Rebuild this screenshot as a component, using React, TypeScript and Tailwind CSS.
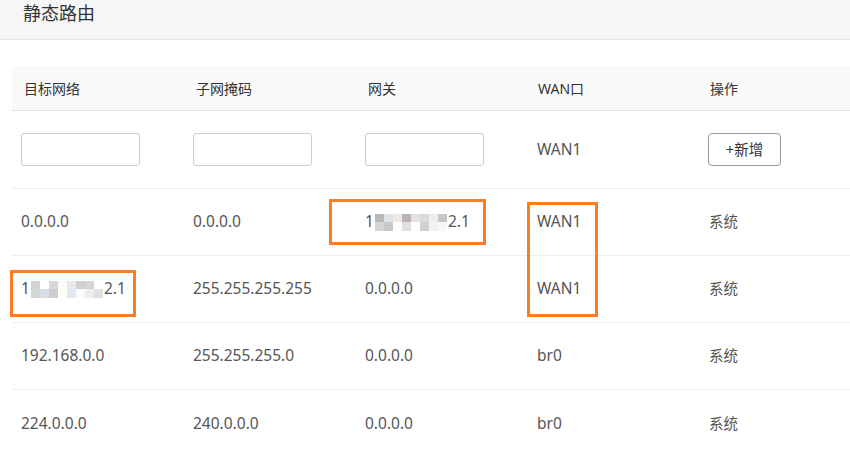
const FONT = { fontFamily: '"Noto Sans", "Noto Sans CJK SC", sans-serif' };

const COLS = 'grid grid-cols-[172px_172px_171px_172px_173px]';

// pixel mosaic used to blank out part of an address
const MOSAIC_A = [
  ['#b8b8b8', '#dde3e8', '#f3e8e0', '#b5b5b5', '#e8e0dc', '#d8dadf', '#eeeeee', '#c5c7cb'],
  ['#d6d6d6', '#c8c8c8', '#ffffff', '#e0e0e0', '#ffffff', '#d0d0d0', '#f2f2f2', '#f8f8f8'],
];
const MOSAIC_B = [
  ['#d2d2d2', '#ffffff', '#d8d8da', '#fafafa', '#ece8e6', '#cfcfd3', '#d5d5d5', '#ffffff'],
  ['#d5d5d5', '#d8dce8', '#cdcdcd', '#fffff5', '#e0e8f4', '#f8fbff', '#eeeeee', '#e0e0e0'],
];

function Mosaic({ cells }: { cells: string[][] }) {
  return (
    <span className="inline-flex flex-col align-middle mx-[1px]">
      {cells.map((row, i) => (
        <span key={i} className="flex">
          {row.map((c, j) => (
            <span key={j} className="block w-[9px] h-[8.5px]" style={{ backgroundColor: c }} />
          ))}
        </span>
      ))}
    </span>
  );
}

function Masked({ cells }: { cells: string[][] }) {
  return (
    <span className="inline-flex items-center">
      <span>1</span>
      <Mosaic cells={cells} />
      <span>2.1</span>
    </span>
  );
}

const rows: { dest: React.ReactNode; mask: string; gw: React.ReactNode; wan: string }[] = [
  { dest: '0.0.0.0', mask: '0.0.0.0', gw: <Masked cells={MOSAIC_A} />, wan: 'WAN1' },
  { dest: <Masked cells={MOSAIC_B} />, mask: '255.255.255.255', gw: '0.0.0.0', wan: 'WAN1' },
  { dest: '192.168.0.0', mask: '255.255.255.0', gw: '0.0.0.0', wan: 'br0' },
  { dest: '224.0.0.0', mask: '240.0.0.0', gw: '0.0.0.0', wan: 'br0' },
];

export default function App() {
  return (
    <div className="w-[850px] h-[453px] overflow-hidden bg-white" style={FONT}>
      {/* page title bar */}
      <div className="h-[40px] bg-[#f6f6f6] border-b border-[#e4e4e4] pl-[23px] pt-[1px]">
        <span className="text-[18px] leading-[24px] text-[#333]">静态路由</span>
      </div>

      <div className="relative ml-[12px] mt-[26px] w-[860px]">
        {/* header */}
        <div className={`${COLS} h-[45px] bg-[#f9f9f9] border-b border-[#e2e2e2] text-[14px] text-[#333] items-center`}>
          <div className="pl-[12px]">目标网络</div>
          <div className="pl-[12px]">子网掩码</div>
          <div className="pl-[12px]">网关</div>
          <div className="pl-[11px]">WAN口</div>
          <div className="pl-[11px]">操作</div>
        </div>

        {/* add row */}
        <div className={`${COLS} h-[78px] border-b border-[#eeeeee] items-center text-[15.5px] text-[#555]`}>
          <div className="pl-[9px]">
            <input className="w-[119px] h-[33px] border border-[#cccccc] rounded-[3px] outline-none" />
          </div>
          <div className="pl-[9px]">
            <input className="w-[119px] h-[33px] border border-[#cccccc] rounded-[3px] outline-none" />
          </div>
          <div className="pl-[9px]">
            <input className="w-[119px] h-[33px] border border-[#cccccc] rounded-[3px] outline-none" />
          </div>
          <div className="pl-[10px]">WAN1</div>
          <div className="pl-[9px]">
            <button className="w-[73px] h-[33px] border border-[#999] rounded-[4px] text-[14.5px] text-[#333] bg-white">
              +新增
            </button>
          </div>
        </div>

        {rows.map((r, i) => (
          <div
            key={i}
            className={`${COLS} h-[67px] items-center text-[15.5px] text-[#555] ${i < rows.length - 1 ? 'border-b border-[#eeeeee]' : ''}`}
          >
            <div className="pl-[9px]">{r.dest}</div>
            <div className="pl-[9px]">{r.mask}</div>
            <div className="pl-[9px]">{r.gw}</div>
            <div className="pl-[10px]">{r.wan}</div>
            <div className="pl-[10px] text-[14.5px]">系统</div>
          </div>
        ))}

        {/* highlight boxes */}
        <div className="absolute left-[-2px] top-[204px] w-[126px] h-[47px] border-[3px] border-[#fb7d24]" />
        <div className="absolute left-[317px] top-[133px] w-[157px] h-[46px] border-[3px] border-[#fb7d24]" />
        <div className="absolute left-[515px] top-[136px] w-[71px] h-[115px] border-[3px] border-[#fb7d24]" />
      </div>
    </div>
  );
}
